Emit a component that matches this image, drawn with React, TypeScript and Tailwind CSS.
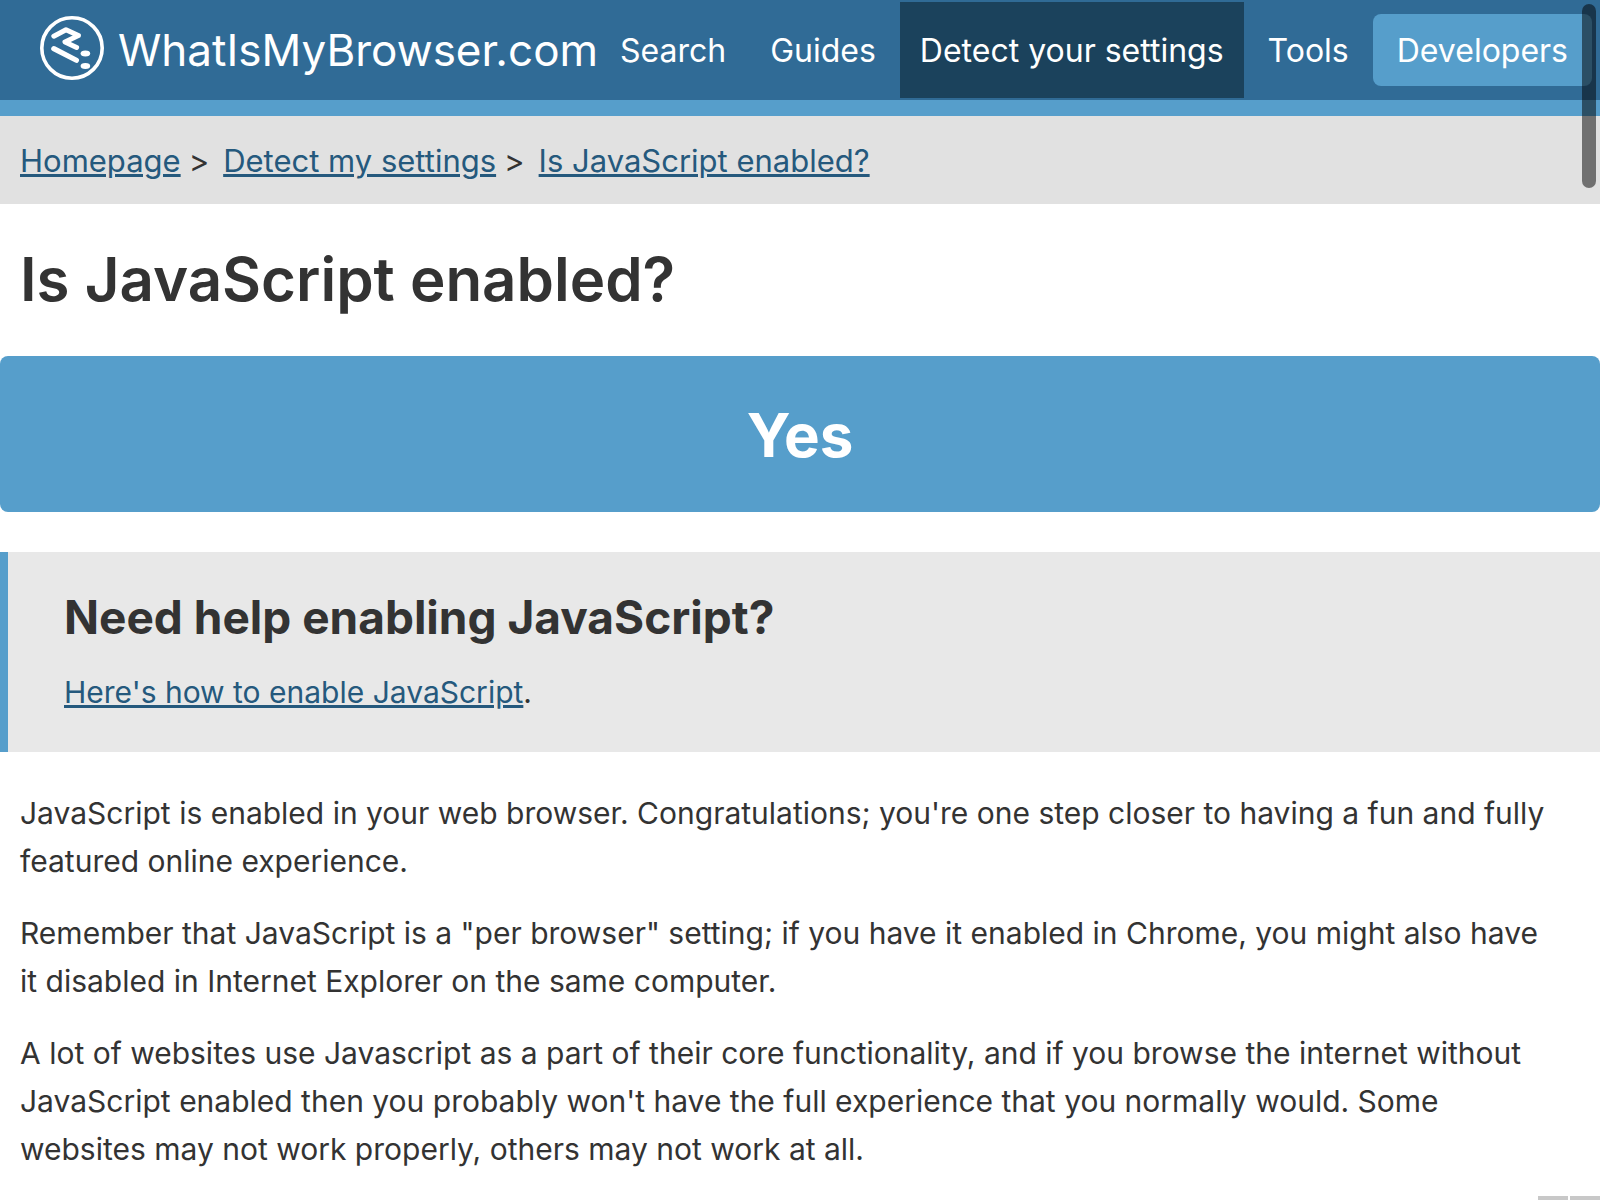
import React from "react";

function Logo() {
  return (
    <svg viewBox="0 0 64 64" className="mb-1 h-16 w-16 shrink-0" fill="none" stroke="white" aria-hidden="true">
      <circle cx="32" cy="32" r="30.2" strokeWidth="3.6" />
      <path d="M13.8 20.2 L26 13.8 L38.4 19.6 L25 26 L36.6 31.4" strokeWidth="5" strokeLinecap="round" strokeLinejoin="round" />
      <path d="M13.8 32.6 L36.4 44.3" strokeWidth="5.2" strokeLinecap="round" />
      <ellipse cx="45.4" cy="37.4" rx="4.8" ry="3" fill="white" stroke="none" />
      <ellipse cx="45.4" cy="50" rx="4.8" ry="3" fill="white" stroke="none" />
    </svg>
  );
}

const navItems = ["Search", "Guides", "Detect your settings", "Tools"];
const crumbs = ["Homepage", "Detect my settings", "Is JavaScript enabled?"];
const paragraphs = [
  "JavaScript is enabled in your web browser. Congratulations; you're one step closer to having a fun and fully featured online experience.",
  'Remember that JavaScript is a "per browser" setting; if you have it enabled in Chrome, you might also have it disabled in Internet Explorer on the same computer.',
  "A lot of websites use Javascript as a part of their core functionality, and if you browse the internet without JavaScript enabled then you probably won't have the full experience that you normally would. Some websites may not work properly, others may not work at all.",
];

export default function App() {
  return (
    <div className="min-h-screen overflow-hidden bg-white font-['Inter',sans-serif] text-[30px] leading-[48px] text-[#333333]">
      <header className="flex items-center justify-between border-b-16 border-[#569ecb] bg-[#306b96] pr-2 pl-10 text-white">
        <a href="#" className="flex items-center gap-[14px] text-[44px]">
          <Logo />
          <span>WhatIsMyBrowser.com</span>
        </a>
        <nav className="flex items-center gap-1 py-[2px] text-[32px] whitespace-nowrap">
          {navItems.map((item) => (
            <a
              key={item}
              href="#"
              className={item === "Detect your settings" ? "bg-[#1b425c] px-5 pt-[25px] pb-[23px]" : "px-5 pt-[25px] pb-[23px]"}
            >
              {item}
            </a>
          ))}
          <a href="#" className="rounded-lg bg-[#569ecb] px-6 pt-[13px] pb-[11px]">
            Developers
          </a>
        </nav>
      </header>

      <nav aria-label="Breadcrumb" className="flex bg-[#e1e1e1] px-5 pt-[21px] pb-[19px] text-[31px]">
        {crumbs.map((crumb, i) => (
          <React.Fragment key={crumb}>
            {i > 0 && <span className="mr-[14px] ml-2">&gt;</span>}
            <a href="#" className="text-[#25597d] underline">
              {crumb}
            </a>
          </React.Fragment>
        ))}
      </nav>

      <main>
        <h1 className="px-5 pt-[35px] pb-[37px] text-[60px] leading-[80px] font-semibold">Is JavaScript enabled?</h1>
        <div className="rounded-lg bg-[#569ecb] pt-[39px] pb-[37px] text-center text-[60px] leading-[80px] font-bold text-white">
          Yes
        </div>
        <section className="mt-10 border-l-8 border-[#569ecb] bg-[#e8e8e8] px-14 pt-9 pb-9">
          <h2 className="text-[46px] leading-[58px] font-bold">Need help enabling JavaScript?</h2>
          <p className="mt-[22px]">
            <a href="#" className="text-[#25597d] underline">
              Here's how to enable JavaScript
            </a>
            .
          </p>
        </section>
        <div className="flex flex-col gap-6 pt-[37px] pr-12 pl-5">
          {paragraphs.map((text) => (
            <p key={text}>{text}</p>
          ))}
        </div>
      </main>

      <div className="fixed top-1 right-1 h-46 w-[14px] rounded-full bg-black/50" />
      <div className="fixed right-0 bottom-0 flex gap-[2px]">
        <div className="h-1 w-[30px] bg-[#c8c8c8]" />
        <div className="h-1 w-[30px] bg-[#c8c8c8]" />
      </div>
    </div>
  );
}
